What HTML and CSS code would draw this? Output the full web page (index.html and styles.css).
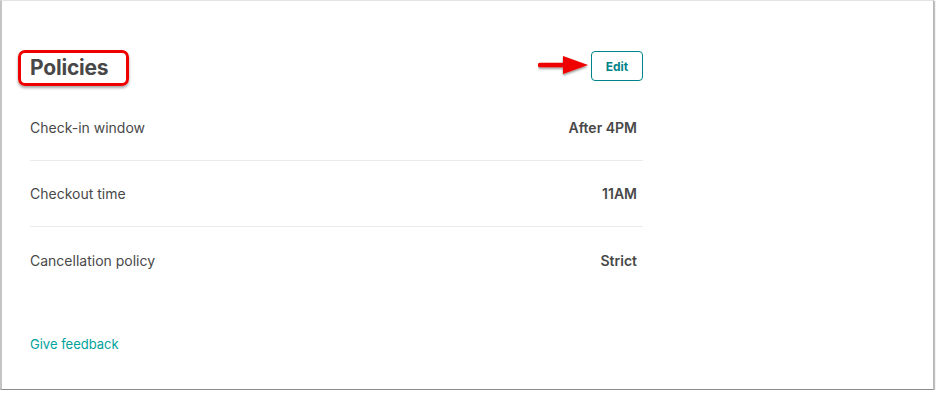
FILE: index.html
```html
<!DOCTYPE html>
<html lang="en">
<head>
    <meta charset="UTF-8">
    <title>Policies</title>
    <link rel="stylesheet" href="styles.css">
</head>
<body>
    <div class="window">
        <div class="section">
            <div class="header">
                <h2 class="title"><span class="mark">Policies</span></h2>
                <div class="actions">
                    <svg class="arrow" width="52" height="22" viewBox="0 0 52 22">
                        <defs>
                            <filter id="sh" x="-20%" y="-40%" width="140%" height="200%">
                                <feDropShadow dx="0" dy="1.5" stdDeviation="1" flood-color="#000" flood-opacity="0.45"/>
                            </filter>
                        </defs>
                        <g filter="url(#sh)">
                            <line x1="2" y1="10" x2="28" y2="10" stroke="#ee0000" stroke-width="4.5" stroke-linecap="round"/>
                            <polygon points="25,1 50,10 25,19" fill="#ee0000"/>
                        </g>
                    </svg>
                    <button class="edit">Edit</button>
                </div>
            </div>

            <div class="row">
                <span class="label">Check-in window</span>
                <span class="value">After 4PM</span>
            </div>
            <div class="row">
                <span class="label">Checkout time</span>
                <span class="value">11AM</span>
            </div>
            <div class="row">
                <span class="label">Cancellation policy</span>
                <span class="value">Strict</span>
            </div>

            <a class="feedback" href="#">Give feedback</a>
        </div>
    </div>
</body>
</html>
```

FILE: styles.css
```css
:root {
    --text: #484848;
    --teal: #008489;
    --line: #ebebeb;
}

* {
    box-sizing: border-box;
}

body {
    margin: 0;
    background: #fff;
    font-family: 'Inter', 'Open Sans', sans-serif;
    color: var(--text);
}

.window {
    width: 934px;
    height: 390px;
    border-top: 1px solid #e4e4e4;
    border-left: 2px solid #c4c4c4;
    border-right: 1px solid #b8b8b8;
    border-bottom: 1px solid #8c8c8c;
    box-shadow: 1px 1px 1px rgba(0, 0, 0, 0.25);
    background: #fff;
}

.section {
    width: 641px;
    padding: 49px 0 0 16px;
}

.header {
    display: flex;
    justify-content: space-between;
    align-items: flex-start;
    margin-bottom: 9px;
}

.title {
    margin: 0;
    font-size: 21px;
    font-weight: 700;
    line-height: 30px;
}

.mark {
    display: inline-block;
    padding: 0 18px 0 9px;
    border: 3px solid #ee0000;
    border-radius: 7px;
    box-shadow: 0 2px 3px rgba(0, 0, 0, 0.35);
    letter-spacing: -0.2px;
}

.actions {
    display: flex;
    align-items: center;
    gap: 1px;
    margin-top: 1px;
}

.arrow {
    display: block;
    margin-top: -1px;
}

.edit {
    width: 52px;
    height: 30px;
    padding: 0;
    border: 1px solid var(--teal);
    border-radius: 4px;
    background: #fff;
    color: var(--teal);
    font-family: inherit;
    font-size: 12px;
    font-weight: 700;
    cursor: pointer;
}

.row {
    display: flex;
    justify-content: space-between;
    align-items: center;
    height: 66px;
    margin-left: 12px;
    padding-right: 6px;
    font-size: 14px;
    border-bottom: 1px solid var(--line);
}

.row:last-of-type {
    border-bottom: none;
}

.value {
    font-weight: 600;
}

.feedback {
    display: inline-block;
    margin: 43px 0 0 12px;
    color: #00a39c;
    font-size: 13px;
    text-decoration: none;
}
```
